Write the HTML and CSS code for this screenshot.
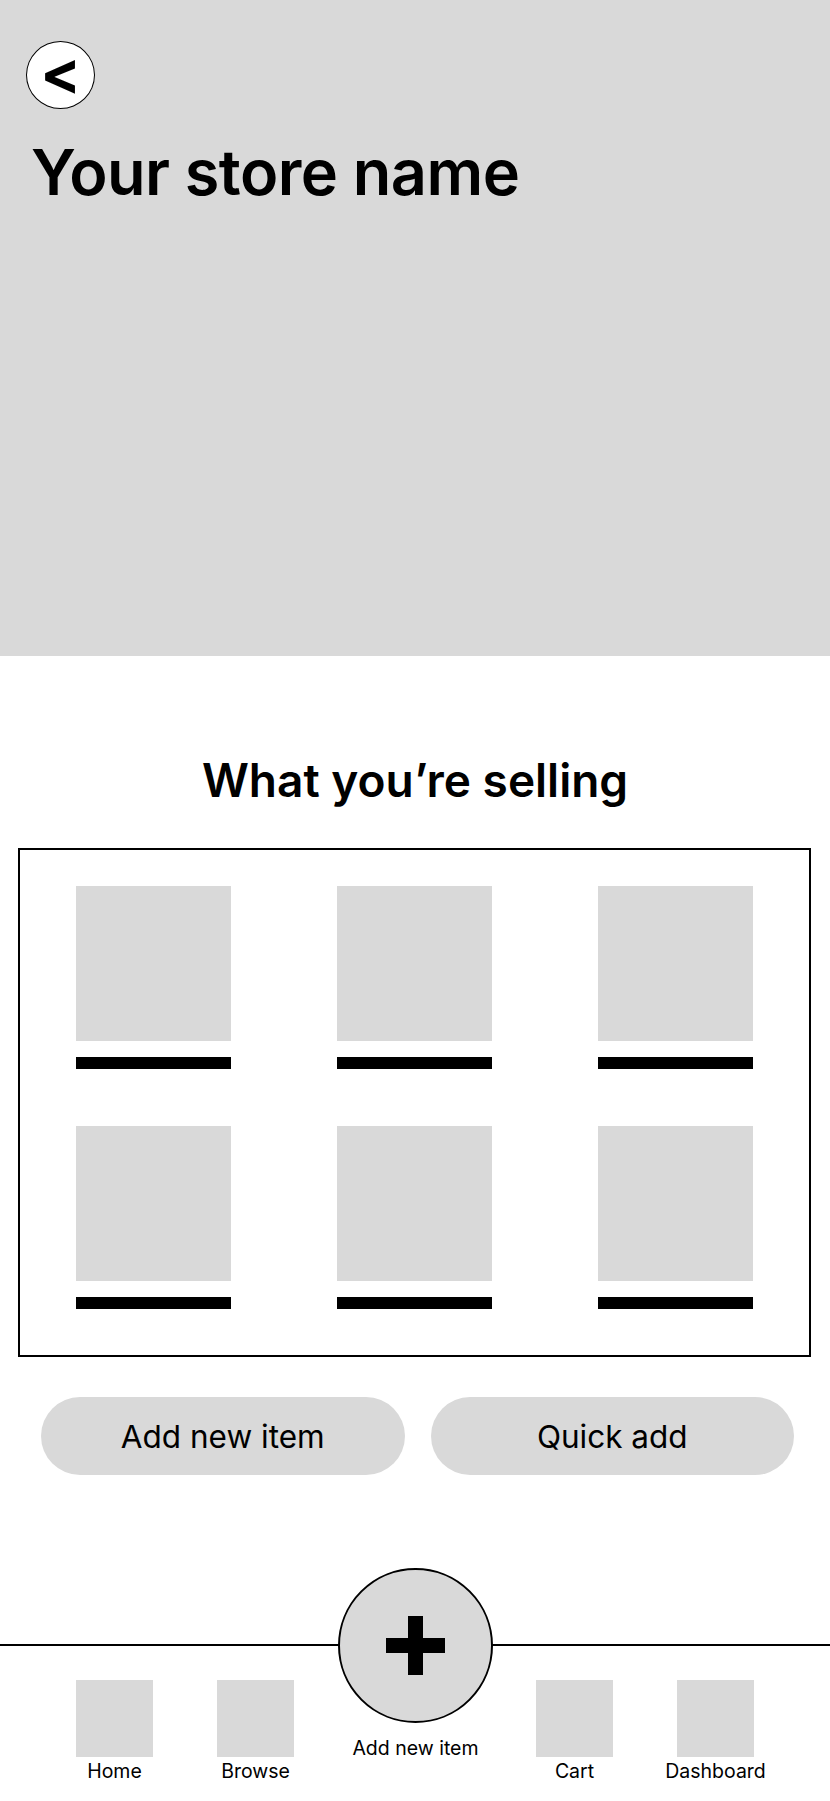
FILE: index.html
```
<!DOCTYPE html>
<html lang="en">
<head>
    <meta charset="UTF-8">
    <meta name="viewport" content="width=device-width, initial-scale=1.0">
    <title>Your store</title>
    <link rel="stylesheet" href="styles.css">
</head>
<body>
    <div class="hero">
        <div class="back">&lt;</div>
        <h1 class="store-name">Your store name</h1>
    </div>

    <h2 class="section-title">What you’re selling</h2>

    <div class="items">
        <div class="item"><div class="thumb"></div><div class="bar"></div></div>
        <div class="item"><div class="thumb"></div><div class="bar"></div></div>
        <div class="item"><div class="thumb"></div><div class="bar"></div></div>
        <div class="item"><div class="thumb"></div><div class="bar"></div></div>
        <div class="item"><div class="thumb"></div><div class="bar"></div></div>
        <div class="item"><div class="thumb"></div><div class="bar"></div></div>
    </div>

    <div class="actions">
        <div class="btn">Add new item</div>
        <div class="btn">Quick add</div>
    </div>

    <div class="nav">
        <div class="nav-item"><div class="nav-icon"></div><p>Home</p></div>
        <div class="nav-item browse"><div class="nav-icon"></div><p>Browse</p></div>
        <div class="nav-add">
            <div class="add-circle">
                <svg width="59" height="59" viewBox="0 0 59 59">
                    <rect x="0" y="22" width="59" height="15" fill="#000"/>
                    <rect x="22" y="0" width="15" height="59" fill="#000"/>
                </svg>
            </div>
            <p>Add new item</p>
        </div>
        <div class="nav-item"><div class="nav-icon"></div><p>Cart</p></div>
        <div class="nav-item dash"><div class="nav-icon"></div><p>Dashboard</p></div>
    </div>
</body>
</html>
```

FILE: styles.css
```
*{
    margin: 0px;
    padding: 0px;
    box-sizing: border-box;
}
body{
    font-family: Inter, "Noto Sans", sans-serif;
    color: #000;
    background-color: #fff;
}
.hero{
    height: 656px;
    background-color: #d9d9d9;
    padding: 41px 26px 0px 26px;
}
.back{
    width: 69px;
    height: 68px;
    border: 1.5px solid #000;
    border-radius: 50%;
    background-color: #fff;
    display: flex;
    justify-content: center;
    align-items: center;
    font-size: 60px;
    font-weight: 700;
    line-height: 1;
    padding-bottom: 6px;
}
.store-name{
    margin-top: 25px;
    margin-left: 5px;
    font-size: 63px;
    font-weight: 600;
    line-height: 77px;
    letter-spacing: -0.55px;
}
.section-title{
    margin-top: 96px;
    text-align: center;
    font-size: 46px;
    font-weight: 600;
    line-height: 56px;
}
.items{
    margin: 40px 19px 0px 18px;
    border: 2px solid #000;
    padding: 36px 0px 46px 0px;
    display: grid;
    grid-template-columns: repeat(3, 155px);
    column-gap: 106px;
    row-gap: 57px;
    justify-content: center;
}
.thumb{
    width: 155px;
    height: 155px;
    background-color: #d9d9d9;
}
.bar{
    margin-top: 16px;
    height: 12px;
    background-color: #000;
}
.actions{
    margin-top: 40px;
    padding: 0px 36px 0px 41px;
    display: flex;
    gap: 26px;
}
.btn{
    flex: 1;
    height: 78px;
    border-radius: 39px;
    background-color: #d9d9d9;
    display: flex;
    justify-content: center;
    align-items: center;
    font-size: 31.5px;
}
.nav{
    margin-top: 169px;
    border-top: 2px solid #000;
    padding: 34px 0px 0px 76px;
    display: flex;
    align-items: flex-start;
}
.nav-item{
    width: 77px;
    display: flex;
    flex-direction: column;
    align-items: center;
}
.nav-item.browse{
    margin-left: 64px;
}
.nav-item.dash{
    margin-left: 64px;
}
.nav-icon{
    width: 77px;
    height: 77px;
    background-color: #d9d9d9;
}
.nav p{
    font-size: 19.5px;
    line-height: 22px;
    white-space: nowrap;
}
.nav-item p{
    margin-top: 3px;
}
.nav-add{
    width: 155px;
    margin: -112px 43px 0px 44px;
    display: flex;
    flex-direction: column;
    align-items: center;
}
.add-circle{
    width: 155px;
    height: 155px;
    border: 2px solid #000;
    border-radius: 50%;
    background-color: #d9d9d9;
    display: flex;
    justify-content: center;
    align-items: center;
}
.nav-add p{
    margin-top: 14px;
}
```
